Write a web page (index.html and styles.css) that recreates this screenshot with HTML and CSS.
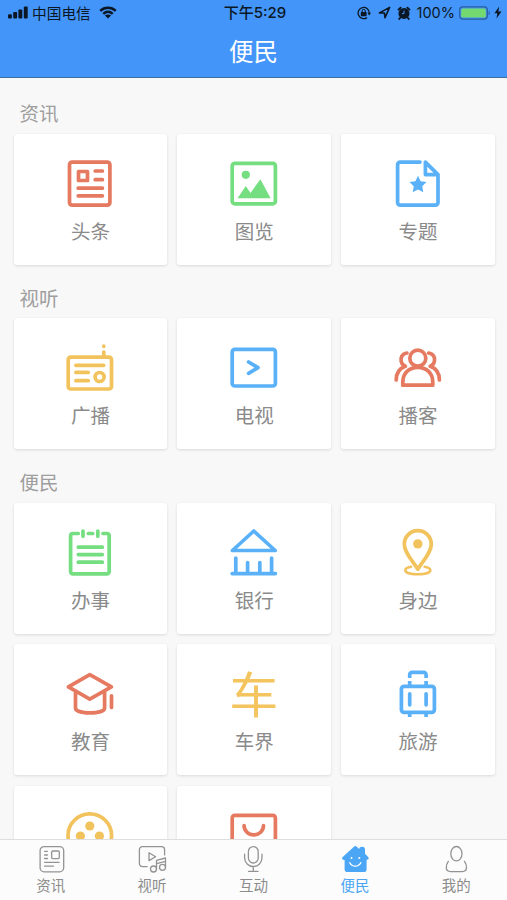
FILE: index.html
```html
<!DOCTYPE html>
<html lang="zh-CN">
  <head>
    <meta charset="UTF-8" />
    <meta name="viewport" content="width=device-width, initial-scale=1.0" />
    <title>便民</title>
    <link rel="stylesheet" href="styles.css">
  </head>
  <body>
    <div class="app">
      <header class="header">
        <div class="status-bar">
          <div class="status-left">
            <svg class="signal" viewBox="0 0 20 13" width="20" height="13">
              <rect x="0" y="8.2" width="3.9" height="4.3" rx="1" />
              <rect x="5.2" y="6" width="3.9" height="6.5" rx="1" />
              <rect x="10.4" y="3.4" width="3.9" height="9.1" rx="1" />
              <rect x="15.8" y="0.4" width="3.9" height="12.1" rx="1" />
            </svg>
            <span class="carrier">中国电信</span>
            <svg class="wifi" viewBox="0 0 18 13" width="18" height="13">
              <path d="M1.2 4.8C5.6.6 12.4.6 16.8 4.8M4.3 7.8c2.8-2.6 6.6-2.6 9.4 0" fill="none" stroke="#0b1724" stroke-width="2.5" />
              <path d="M9 12.5L5.9 9.5c1.8-1.5 4.4-1.5 6.2 0z" />
            </svg>
          </div>
          <div class="clock">下午5:29</div>
          <div class="status-right">
            <svg viewBox="0 0 14 14" width="14" height="14">
              <path d="M10 11.6A5.6 5.6 0 1 1 12.3 7.2" fill="none" stroke="#0b1724" stroke-width="1.3" />
              <path d="M10.4 6.8h3.6l-1.8 2.8z" />
              <rect x="3.8" y="6.1" width="5.8" height="4.1" rx=".6" />
              <path d="M5.1 6.5V5a1.6 1.6 0 0 1 3.2 0v1.5" fill="none" stroke="#0b1724" />
            </svg>
            <svg class="location" viewBox="0 0 13 13" width="13" height="13">
              <path d="M1.5 6.9L11.6 1.4 7 11.7 6.4 7z" fill="none" stroke="#0b1724" stroke-width="1.6" stroke-linejoin="round" />
            </svg>
            <svg class="alarm" viewBox="0 0 14 14" width="14" height="14">
              <circle cx="7" cy="7.4" r="5.5" />
              <path d="M3 12l-.7.9M11 12l.7.9M1.5 3.6L3.6 1.7M12.5 3.6l-2.1-1.9" stroke="#0b1724" stroke-width="1.9" stroke-linecap="round" />
              <path d="M7 4.6v3H5" fill="none" stroke="#4395f9" stroke-width="1" />
            </svg>
            <span class="percent">100%</span>
            <svg class="battery" viewBox="0 0 32 14" width="32" height="14">
              <rect x=".7" y=".9" width="27.6" height="12.2" rx="3" fill="none" stroke="#2a5d9c" stroke-width="1.2" />
              <rect x="2.2" y="2.4" width="24.6" height="9.2" rx="1.6" fill="#74d970" />
              <path d="M29.7 4.9c1.6.6 1.6 3.6 0 4.2z" fill="#2a5d9c" />
            </svg>
            <svg class="bolt" viewBox="0 0 8 13" width="8" height="13">
              <path d="M5.2.6L.4 7.3h2.9L2.5 12.4 7.5 5.4H4.4z" />
            </svg>
          </div>
        </div>
        <h1 class="title">便民</h1>
      </header>

      <main class="content">
        <section class="section">
          <h2 class="section-title">资讯</h2>
          <div class="grid">
            <a class="card">
              <svg class="icon red" viewBox="0 0 48 48">
                <rect x="3.5" y="2.1" width="40.4" height="43" rx="2.6" />
                <rect x="12.5" y="11.5" width="9" height="9" />
                <path d="M29.2 11h7.2M29.2 19.7h7.2M12.2 28.2h24.2M12.2 35.8h24.2" />
              </svg>
              <span class="label">头条</span>
            </a>
            <a class="card">
              <svg class="icon green" viewBox="0 0 48 48">
                <rect x="2.2" y="3.3" width="43.2" height="40.5" rx="2.6" />
                <circle class="solid" cx="15.8" cy="14.8" r="4.1" />
                <path class="solid" d="M7.6 38.3l8.2-12.3 4.7 7 9.9-13.8 10.2 19.1z" />
              </svg>
              <span class="label">图览</span>
            </a>
            <a class="card">
              <svg class="icon blue" viewBox="0 0 48 48">
                <path d="M26 2.1H6.2a2.6 2.6 0 0 0-2.6 2.6v37.8a2.6 2.6 0 0 0 2.6 2.6h35.2a2.6 2.6 0 0 0 2.6-2.6V14.6L31.4 2.1v12.5H44" />
                <path class="solid" d="M24 15.8l2.6 5.5 6 .8-4.4 4.2 1.1 6L24 29.4l-5.3 2.9 1.1-6-4.4-4.2 6-.8z" />
              </svg>
              <span class="label">专题</span>
            </a>
          </div>
        </section>

        <section class="section">
          <h2 class="section-title">视听</h2>
          <div class="grid">
            <a class="card">
              <svg class="icon yellow" viewBox="0 0 48 48">
                <rect x="2.2" y="13.1" width="43.3" height="31.9" rx="2.6" />
                <path d="M9.9 21.3h27.8M9.9 28.4h12.3M9.9 36.7h12.3M37.8 8v4M37.8 2.2v.1" />
                <circle cx="33.6" cy="33" r="4.5" />
              </svg>
              <span class="label">广播</span>
            </a>
            <a class="card">
              <svg class="icon blue" viewBox="0 0 48 48">
                <rect x="2.2" y="5.4" width="43.2" height="36.6" rx="2.6" />
                <path d="M18.6 18l9.4 5.7-9.4 5.7" />
              </svg>
              <span class="label">电视</span>
            </a>
            <a class="card">
              <svg class="icon red" viewBox="0 0 48 48">
                <circle cx="23.8" cy="14.2" r="8" />
                <path d="M8.8 41.2V38c0-8.8 6.2-14.7 15-14.7S38.8 29.2 38.8 38v3.2z" />
                <path d="M13 9c-5 .7-6.6 4.6-5.8 8.4.5 2.3 2 4.1 4.2 4.9C5.2 24.5 2.2 29.5 2.2 36M34.6 9c5 .7 6.6 4.6 5.8 8.4-.5 2.3-2 4.1-4.2 4.9 6.2 2.2 9.2 7.2 9.2 13.7" />
              </svg>
              <span class="label">播客</span>
            </a>
          </div>
        </section>

        <section class="section">
          <h2 class="section-title">便民</h2>
          <div class="grid">
            <a class="card">
              <svg class="icon green" viewBox="0 0 48 48">
                <path d="M12.2 4.5H6.9a2.3 2.3 0 0 0-2.3 2.3v35.7a2.3 2.3 0 0 0 2.3 2.3h34a2.3 2.3 0 0 0 2.3-2.3V6.8a2.3 2.3 0 0 0-2.3-2.3H37M22.3 4.5h4.4M17 2v5.2M31.8 2v5.2" />
                <path d="M12.3 18.2h24M12.3 25.6h24M12.3 33.2h24" />
              </svg>
              <span class="label">办事</span>
            </a>
            <a class="card">
              <svg class="icon blue" viewBox="0 0 48 48">
                <path d="M23.8 2L2.4 21.5h42.8zM2.2 44.6h43.2M5.8 29.2v15M17.6 33.5v11M29.8 33.5v11M41.6 29.2v15" />
              </svg>
              <span class="label">银行</span>
            </a>
            <a class="card">
              <svg class="icon yellow" viewBox="0 0 48 48">
                <path d="M23.8 40.2C18.6 32 10.3 23.6 10.3 15.2a13.5 13.5 0 0 1 27 0c0 8.4-8.3 16.8-13.5 25z" />
                <path class="thin" d="M17 37.8c-3.6.6-5.7 1.9-5.7 3.5 0 2.3 5.4 4 12.5 4s12.5-1.7 12.5-4c0-1.6-2.1-2.9-5.7-3.5" />
                <circle class="solid" cx="23.8" cy="14.9" r="4.7" />
              </svg>
              <span class="label">身边</span>
            </a>
            <a class="card">
              <svg class="icon red" viewBox="0 0 48 48">
                <path d="M23.8 4.7L2.4 16.9l21.4 12.2 21.6-12.2zM9.5 21v17c0 3 6.4 4.9 14.6 4.9S38.6 41 38.6 38V21M45.5 25.8v11.7" />
              </svg>
              <span class="label">教育</span>
            </a>
            <a class="card">
              <span class="icon icon-text">车</span>
              <span class="label">车界</span>
            </a>
            <a class="card">
              <svg class="icon blue" viewBox="0 0 48 48">
                <rect x="7.4" y="16.4" width="33" height="26" rx="2.6" />
                <path d="M15.7 23.8v11M32.1 23.8v11" />
                <path class="butt" d="M15.7 8V4.8a2.4 2.4 0 0 1 2.4-2.4h11.6a2.4 2.4 0 0 1 2.4 2.4V8M15.7 11v5M32.1 11v5M15.7 43v4M32.1 43v4" />
              </svg>
              <span class="label">旅游</span>
            </a>
            <a class="card">
              <svg class="icon yellow" viewBox="0 0 48 48">
                <circle cx="23.8" cy="23.6" r="21.8" />
                <circle class="solid" cx="23.8" cy="14" r="4.6" />
                <circle class="solid" cx="14.4" cy="24" r="4.6" />
                <circle class="solid" cx="33.4" cy="24" r="4.6" />
                <circle class="solid" cx="23.8" cy="34" r="4.6" />
              </svg>
            </a>
            <a class="card">
              <svg class="icon red" viewBox="0 0 48 48">
                <rect x="2.2" y="3.4" width="43.2" height="41" rx="2.6" />
                <path d="M14.1 13.6c0 5.3 4.3 9.3 9.7 9.3s9.7-4 9.7-9.3" />
              </svg>
            </a>
          </div>
        </section>
      </main>

      <nav class="tabbar">
        <a class="tab">
          <svg viewBox="0 0 28 28">
            <rect x="3.1" y="1.6" width="23.6" height="25.2" rx="4" />
            <rect x="14.7" y="6" width="7.6" height="7.6" rx="1" />
            <path d="M7.6 6.3h2.8M7.6 10h2.8M7.6 13.5h2.8M7.6 17.3h14.6M7.6 21.2h8.8" />
          </svg>
          <span>资讯</span>
        </a>
        <a class="tab">
          <svg viewBox="0 0 28 28">
            <path d="M9.2 21.6H4.4a3 3 0 0 1-3-3V4.7a3 3 0 0 1 3-3h19.2a3 3 0 0 1 3 3v5.2" />
            <path d="M11 7.8v7.8l6.6-3.9z" />
            <circle cx="15.5" cy="24" r="3" />
            <circle cx="24.5" cy="22.3" r="3" />
            <path d="M18.5 24v-8.7l9-2.3v9.3M18.5 18.7l9-2.3" />
          </svg>
          <span>视听</span>
        </a>
        <a class="tab">
          <svg viewBox="0 0 28 28">
            <rect x="9.4" y="1.6" width="9.8" height="16.4" rx="4.9" />
            <path d="M5.6 9.2v3.6a8.7 8.7 0 0 0 17.4 0V9.2M14.3 21.6v4.6M9.6 26.4h9.4" />
          </svg>
          <span>互动</span>
        </a>
        <a class="tab active">
          <svg viewBox="0 0 28 28">
            <path class="house" d="M13.2 1.6a1.8 1.8 0 0 1 2.3 0l2.7 2.3c.3-1.5 1-2.2 2.8-2.2 2.3 0 3 .8 3 3v4l3.1 3.2c1.3 1.4.6 2.7-1.5 2.9v9.4a2.8 2.8 0 0 1-2.8 2.8H6.4a2.8 2.8 0 0 1-2.8-2.8v-9.3c-2.5-.1-3.3-1.5-1.9-3z" />
            <circle class="eye" cx="10.5" cy="13.1" r="1" />
            <circle class="eye" cx="18.3" cy="13.1" r="1" />
            <path class="smile" d="M8.8 17.7c2.3 4.6 8.6 4.6 11 0" />
          </svg>
          <span>便民</span>
        </a>
        <a class="tab">
          <svg viewBox="0 0 28 28">
            <ellipse cx="14.4" cy="8.7" rx="5.6" ry="7.2" />
            <path d="M6.3 16.4c-1.3 1.8-2 4-2 6.2 0 2.8 1.6 4 4.2 4h11.8c2.6 0 4.2-1.2 4.2-4 0-2.2-.7-4.4-2-6.2" />
          </svg>
          <span>我的</span>
        </a>
      </nav>
    </div>
  </body>
</html>
```
FILE: styles.css
```css
* {
  box-sizing: border-box;
}
body {
  margin: 0;
  font-family: "Noto Sans CJK SC", sans-serif;
  background-color: #f8f8f8;
}
.app {
  display: flex;
  flex-direction: column;
  height: 900px;
  overflow: hidden;
}

/* header */
.header {
  flex: none;
  height: 78px;
  background-color: #4395f9;
  border-bottom: 1px solid #3b6da5;
}
.status-bar {
  display: grid;
  grid-template-columns: 1fr auto 1fr;
  align-items: center;
  height: 25px;
  padding: 0 5px 0 8px;
  color: #0b1724;
  font-size: 14.7px;
  line-height: 25px;
}
.status-bar svg {
  fill: #0b1724;
}
.status-left,
.status-right {
  display: flex;
  align-items: center;
}
.status-right {
  justify-content: flex-end;
}
.carrier {
  margin: 0 8px 0 4px;
}
.clock {
  font-family: Inter, "Noto Sans CJK SC", sans-serif;
  font-size: 15px;
  font-weight: 500;
}
.location {
  margin-left: 7px;
}
.alarm {
  margin-left: 6px;
}
.percent {
  margin: 0 4px 0 6px;
  font-family: Inter, sans-serif;
  font-size: 14.5px;
}
.bolt {
  margin-left: 3px;
}
.title {
  margin: 0;
  color: #fff;
  font-size: 24.5px;
  font-weight: 400;
  line-height: 52px;
  text-align: center;
}

/* content */
.content {
  flex: 1;
  min-height: 0;
  padding: 2px 12px 0 13.5px;
  overflow: hidden;
}
.section-title {
  margin: 0;
  padding: 19px 0 6.5px 6px;
  color: #9e9e9e;
  font-size: 19.5px;
  font-weight: 400;
  line-height: 28px;
}
.grid {
  display: grid;
  grid-template-columns: repeat(3, 1fr);
  grid-auto-rows: 131px;
  gap: 10.5px 10px;
}
.card {
  display: flex;
  flex-direction: column;
  align-items: center;
  padding-top: 26px;
  background-color: #fff;
  border-radius: 3px;
  box-shadow: 0 1px 3px rgba(0, 0, 0, 0.12);
}
.label {
  margin-top: 9px;
  color: #8a8a8a;
  font-size: 19.5px;
  line-height: 28px;
}

/* card icons */
.icon {
  flex: none;
  width: 48px;
  height: 48px;
  overflow: visible;
  fill: none;
  stroke: currentColor;
  stroke-width: 3.7;
  stroke-linecap: round;
  stroke-linejoin: round;
}
.icon .solid {
  fill: currentColor;
  stroke: none;
}
.icon .thin {
  stroke-width: 2.6;
}
.icon .butt {
  stroke-linecap: butt;
}
.icon-text {
  overflow: hidden;
  color: #f4c45f;
  font-size: 49px;
  line-height: 43px;
  text-align: center;
  text-indent: -1px;
}
.red {
  color: #e67a60;
}
.green {
  color: #74de80;
}
.blue {
  color: #5bb1f8;
}
.yellow {
  color: #f2c35d;
}

/* bottom tabs */
.tabbar {
  flex: none;
  display: grid;
  grid-template-columns: repeat(5, 1fr);
  height: 61px;
  background-color: #fcfcfc;
  border-top: 1px solid #dedede;
}
.tab {
  display: flex;
  flex-direction: column;
  align-items: center;
  padding-top: 5px;
  color: #8c8c8c;
  font-size: 14.5px;
  line-height: 22px;
}
.tab svg {
  width: 28px;
  height: 28px;
  margin-bottom: 1px;
  overflow: visible;
  fill: none;
  stroke: #939393;
  stroke-width: 1.3;
  stroke-linecap: round;
  stroke-linejoin: round;
}
.tab.active {
  color: #4ba6f5;
}
.tab .house {
  fill: #4ba6f5;
  stroke: none;
}
.tab .eye {
  fill: #fff;
  stroke: none;
}
.tab .smile {
  stroke: #fff;
}
```
